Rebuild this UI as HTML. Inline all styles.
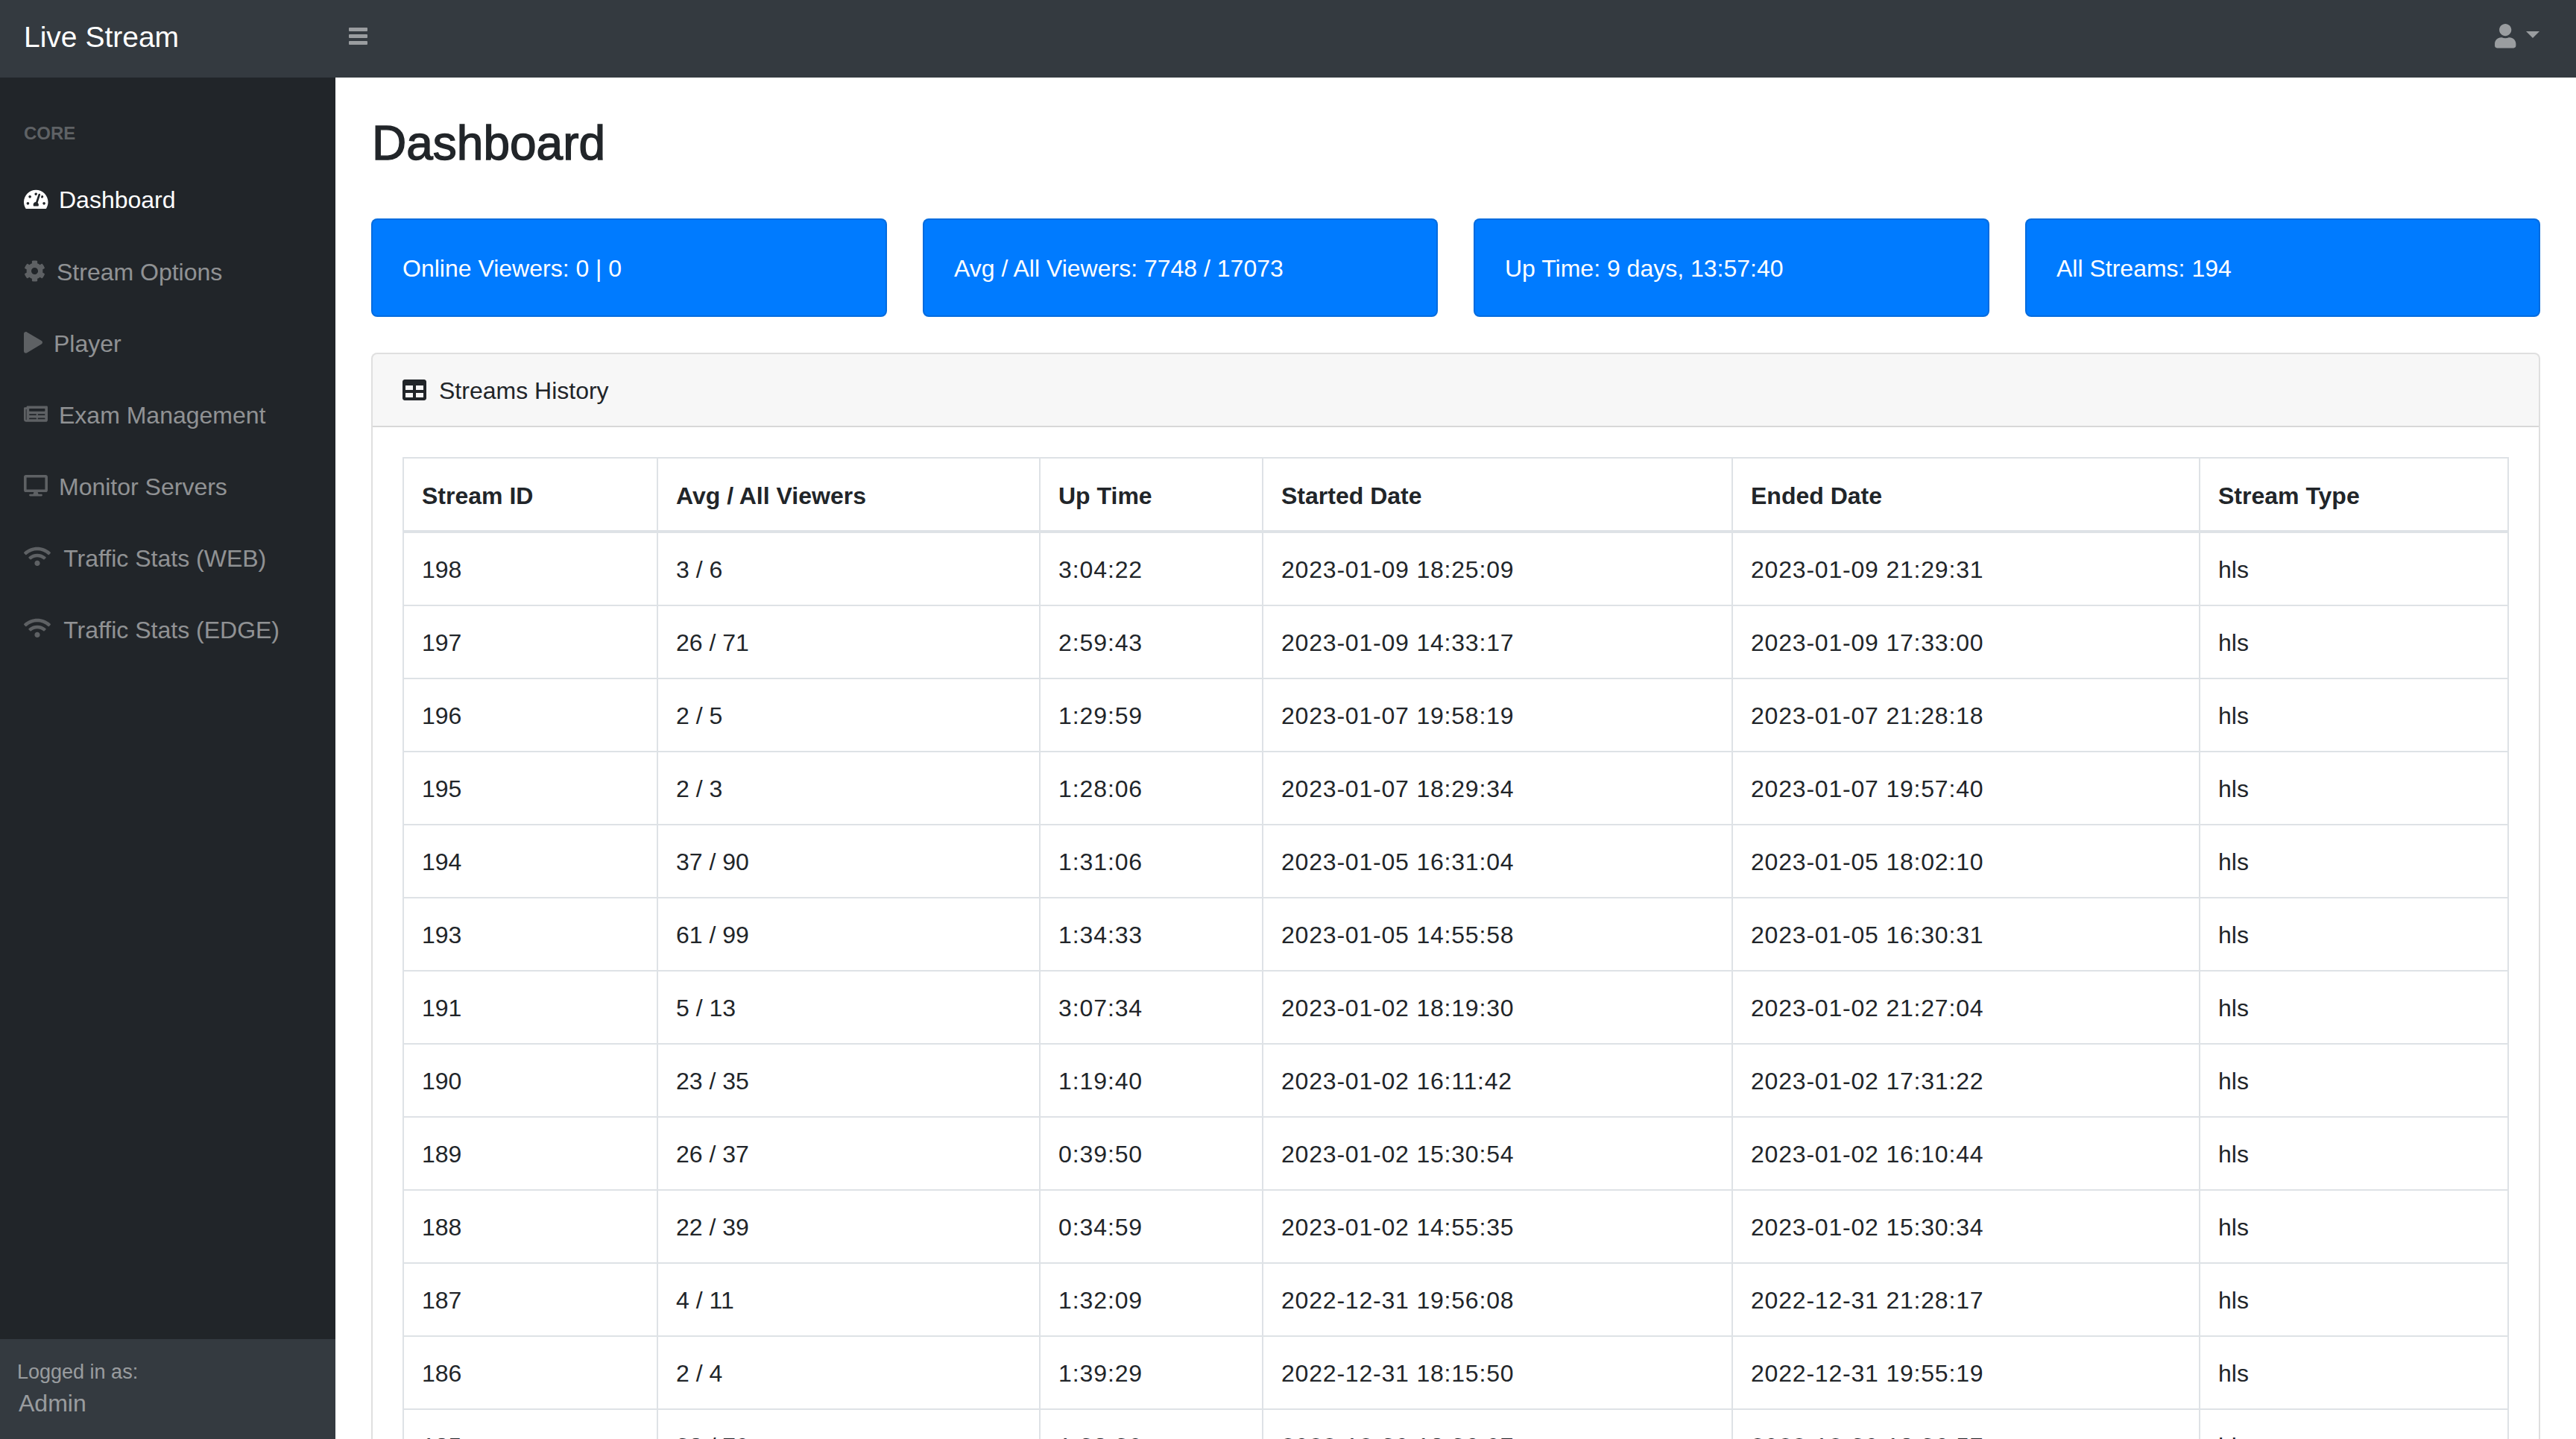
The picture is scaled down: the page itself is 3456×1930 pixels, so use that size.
<!DOCTYPE html>
<html lang="en"><head><meta charset="utf-8"><title>Dashboard - Live Stream</title>
<style>
*{box-sizing:border-box;margin:0;padding:0}
html,body{width:3456px;height:1930px;overflow:hidden;background:#fff}
body{position:relative;font-family:"Liberation Sans",sans-serif;color:#212529;-webkit-font-smoothing:antialiased}
.t{position:absolute;white-space:nowrap}
.ic{position:absolute;overflow:visible}
.topnav{position:absolute;left:0;top:0;width:3456px;height:104px;background:#343a40}
.bar{position:absolute;left:468px;width:25px;height:4.6px;border-radius:1px;background:rgba(255,255,255,.5)}
.caret{position:absolute;left:3389px;top:41.8px;width:0;height:0;border-top:9.6px solid rgba(255,255,255,.5);border-left:9.6px solid transparent;border-right:9.6px solid transparent}
.sidenav{position:absolute;left:0;top:0;width:450px;height:1930px;}
.sidenav::before{content:"";position:absolute;left:0;top:104px;width:450px;height:1826px;background:#212529}
.sfoot{position:absolute;left:0;top:1796px;width:450px;height:134px;background:#343a40}
.content{position:absolute;left:0;top:0;width:3456px;height:1930px}
.bcard{position:absolute;top:293px;height:132px;background:#007bff;border:2px solid rgba(0,0,0,.125);border-radius:8px}
.card{position:absolute;left:498px;top:473px;width:2910px;height:1700px;border:2px solid rgba(0,0,0,.125);border-radius:8px;background:#fff;overflow:hidden}
.chead{position:absolute;left:0;top:0;width:100%;height:98px;background:rgba(0,0,0,.03);border-bottom:2px solid rgba(0,0,0,.125)}
.vl{position:absolute;top:613px;width:2px;height:1400px;background:#dee2e6}
.hl{position:absolute;left:540px;width:2826px;background:#dee2e6}
</style></head>
<body>
<main class="content"><div class="t h1" style="left:499px;top:143.80px;font-size:64px;line-height:96px;color:#212529;-webkit-text-stroke:1.4px #212529;">Dashboard</div><div class="bcard" style="left:498px;width:692px"></div><div class="t" style="left:540px;top:336.40px;font-size:32px;line-height:48px;color:#fff;">Online Viewers: 0 | 0</div><div class="bcard" style="left:1238px;width:691px"></div><div class="t" style="left:1280px;top:336.40px;font-size:32px;line-height:48px;color:#fff;">Avg / All Viewers: 7748 / 17073</div><div class="bcard" style="left:1977px;width:692px"></div><div class="t" style="left:2019px;top:336.40px;font-size:32px;line-height:48px;color:#fff;">Up Time: 9 days, 13:57:40</div><div class="bcard" style="left:2717px;width:691px"></div><div class="t" style="left:2759px;top:336.40px;font-size:32px;line-height:48px;color:#fff;">All Streams: 194</div><div class="card"><div class="chead"></div></div><svg class="ic" style="left:540px;top:507.3px;width:32px;height:32px" viewBox="0 0 512 512"><path fill="#212529" d="M464 32H48C21.49 32 0 53.49 0 80v352c0 26.51 21.49 48 48 48h416c26.51 0 48-21.49 48-48V80c0-26.51-21.49-48-48-48zM224 416H64v-96h160v96zm0-160H64v-96h160v96zm224 160H288v-96h160v96zm0-160H288v-96h160v96z"/></svg><div class="t" style="left:589px;top:500.00px;font-size:32px;line-height:48px;color:#212529;">Streams History</div><div class="vl" style="left:540px"></div><div class="vl" style="left:881px"></div><div class="vl" style="left:1394px"></div><div class="vl" style="left:1693px"></div><div class="vl" style="left:2323px"></div><div class="vl" style="left:2950px"></div><div class="vl" style="left:3364px"></div><div class="hl" style="top:613px;height:2px"></div><div class="hl" style="top:711px;height:4px"></div><div class="hl" style="top:811px;height:2px"></div><div class="hl" style="top:909px;height:2px"></div><div class="hl" style="top:1007px;height:2px"></div><div class="hl" style="top:1105px;height:2px"></div><div class="hl" style="top:1203px;height:2px"></div><div class="hl" style="top:1301px;height:2px"></div><div class="hl" style="top:1399px;height:2px"></div><div class="hl" style="top:1497px;height:2px"></div><div class="hl" style="top:1595px;height:2px"></div><div class="hl" style="top:1693px;height:2px"></div><div class="hl" style="top:1791px;height:2px"></div><div class="hl" style="top:1889px;height:2px"></div><div class="t" style="left:566px;top:640.50px;font-size:32px;line-height:48px;color:#212529;font-weight:bold;">Stream ID</div><div class="t" style="left:907px;top:640.50px;font-size:32px;line-height:48px;color:#212529;font-weight:bold;">Avg / All Viewers</div><div class="t" style="left:1420px;top:640.50px;font-size:32px;line-height:48px;color:#212529;font-weight:bold;">Up Time</div><div class="t" style="left:1719px;top:640.50px;font-size:32px;line-height:48px;color:#212529;font-weight:bold;">Started Date</div><div class="t" style="left:2349px;top:640.50px;font-size:32px;line-height:48px;color:#212529;font-weight:bold;">Ended Date</div><div class="t" style="left:2976px;top:640.50px;font-size:32px;line-height:48px;color:#212529;font-weight:bold;">Stream Type</div><div class="t" style="left:566px;top:740.00px;font-size:32px;line-height:48px;color:#212529;">198</div><div class="t" style="left:907px;top:740.00px;font-size:32px;line-height:48px;color:#212529;">3 / 6</div><div class="t" style="left:1420px;top:740.00px;font-size:32px;line-height:48px;color:#212529;letter-spacing:0.9px;">3:04:22</div><div class="t" style="left:1719px;top:740.00px;font-size:32px;line-height:48px;color:#212529;letter-spacing:0.8px;">2023-01-09 18:25:09</div><div class="t" style="left:2349px;top:740.00px;font-size:32px;line-height:48px;color:#212529;letter-spacing:0.8px;">2023-01-09 21:29:31</div><div class="t" style="left:2976px;top:740.00px;font-size:32px;line-height:48px;color:#212529;">hls</div><div class="t" style="left:566px;top:838.00px;font-size:32px;line-height:48px;color:#212529;">197</div><div class="t" style="left:907px;top:838.00px;font-size:32px;line-height:48px;color:#212529;">26 / 71</div><div class="t" style="left:1420px;top:838.00px;font-size:32px;line-height:48px;color:#212529;letter-spacing:0.9px;">2:59:43</div><div class="t" style="left:1719px;top:838.00px;font-size:32px;line-height:48px;color:#212529;letter-spacing:0.8px;">2023-01-09 14:33:17</div><div class="t" style="left:2349px;top:838.00px;font-size:32px;line-height:48px;color:#212529;letter-spacing:0.8px;">2023-01-09 17:33:00</div><div class="t" style="left:2976px;top:838.00px;font-size:32px;line-height:48px;color:#212529;">hls</div><div class="t" style="left:566px;top:936.00px;font-size:32px;line-height:48px;color:#212529;">196</div><div class="t" style="left:907px;top:936.00px;font-size:32px;line-height:48px;color:#212529;">2 / 5</div><div class="t" style="left:1420px;top:936.00px;font-size:32px;line-height:48px;color:#212529;letter-spacing:0.9px;">1:29:59</div><div class="t" style="left:1719px;top:936.00px;font-size:32px;line-height:48px;color:#212529;letter-spacing:0.8px;">2023-01-07 19:58:19</div><div class="t" style="left:2349px;top:936.00px;font-size:32px;line-height:48px;color:#212529;letter-spacing:0.8px;">2023-01-07 21:28:18</div><div class="t" style="left:2976px;top:936.00px;font-size:32px;line-height:48px;color:#212529;">hls</div><div class="t" style="left:566px;top:1034.00px;font-size:32px;line-height:48px;color:#212529;">195</div><div class="t" style="left:907px;top:1034.00px;font-size:32px;line-height:48px;color:#212529;">2 / 3</div><div class="t" style="left:1420px;top:1034.00px;font-size:32px;line-height:48px;color:#212529;letter-spacing:0.9px;">1:28:06</div><div class="t" style="left:1719px;top:1034.00px;font-size:32px;line-height:48px;color:#212529;letter-spacing:0.8px;">2023-01-07 18:29:34</div><div class="t" style="left:2349px;top:1034.00px;font-size:32px;line-height:48px;color:#212529;letter-spacing:0.8px;">2023-01-07 19:57:40</div><div class="t" style="left:2976px;top:1034.00px;font-size:32px;line-height:48px;color:#212529;">hls</div><div class="t" style="left:566px;top:1132.00px;font-size:32px;line-height:48px;color:#212529;">194</div><div class="t" style="left:907px;top:1132.00px;font-size:32px;line-height:48px;color:#212529;">37 / 90</div><div class="t" style="left:1420px;top:1132.00px;font-size:32px;line-height:48px;color:#212529;letter-spacing:0.9px;">1:31:06</div><div class="t" style="left:1719px;top:1132.00px;font-size:32px;line-height:48px;color:#212529;letter-spacing:0.8px;">2023-01-05 16:31:04</div><div class="t" style="left:2349px;top:1132.00px;font-size:32px;line-height:48px;color:#212529;letter-spacing:0.8px;">2023-01-05 18:02:10</div><div class="t" style="left:2976px;top:1132.00px;font-size:32px;line-height:48px;color:#212529;">hls</div><div class="t" style="left:566px;top:1230.00px;font-size:32px;line-height:48px;color:#212529;">193</div><div class="t" style="left:907px;top:1230.00px;font-size:32px;line-height:48px;color:#212529;">61 / 99</div><div class="t" style="left:1420px;top:1230.00px;font-size:32px;line-height:48px;color:#212529;letter-spacing:0.9px;">1:34:33</div><div class="t" style="left:1719px;top:1230.00px;font-size:32px;line-height:48px;color:#212529;letter-spacing:0.8px;">2023-01-05 14:55:58</div><div class="t" style="left:2349px;top:1230.00px;font-size:32px;line-height:48px;color:#212529;letter-spacing:0.8px;">2023-01-05 16:30:31</div><div class="t" style="left:2976px;top:1230.00px;font-size:32px;line-height:48px;color:#212529;">hls</div><div class="t" style="left:566px;top:1328.00px;font-size:32px;line-height:48px;color:#212529;">191</div><div class="t" style="left:907px;top:1328.00px;font-size:32px;line-height:48px;color:#212529;">5 / 13</div><div class="t" style="left:1420px;top:1328.00px;font-size:32px;line-height:48px;color:#212529;letter-spacing:0.9px;">3:07:34</div><div class="t" style="left:1719px;top:1328.00px;font-size:32px;line-height:48px;color:#212529;letter-spacing:0.8px;">2023-01-02 18:19:30</div><div class="t" style="left:2349px;top:1328.00px;font-size:32px;line-height:48px;color:#212529;letter-spacing:0.8px;">2023-01-02 21:27:04</div><div class="t" style="left:2976px;top:1328.00px;font-size:32px;line-height:48px;color:#212529;">hls</div><div class="t" style="left:566px;top:1426.00px;font-size:32px;line-height:48px;color:#212529;">190</div><div class="t" style="left:907px;top:1426.00px;font-size:32px;line-height:48px;color:#212529;">23 / 35</div><div class="t" style="left:1420px;top:1426.00px;font-size:32px;line-height:48px;color:#212529;letter-spacing:0.9px;">1:19:40</div><div class="t" style="left:1719px;top:1426.00px;font-size:32px;line-height:48px;color:#212529;letter-spacing:0.8px;">2023-01-02 16:11:42</div><div class="t" style="left:2349px;top:1426.00px;font-size:32px;line-height:48px;color:#212529;letter-spacing:0.8px;">2023-01-02 17:31:22</div><div class="t" style="left:2976px;top:1426.00px;font-size:32px;line-height:48px;color:#212529;">hls</div><div class="t" style="left:566px;top:1524.00px;font-size:32px;line-height:48px;color:#212529;">189</div><div class="t" style="left:907px;top:1524.00px;font-size:32px;line-height:48px;color:#212529;">26 / 37</div><div class="t" style="left:1420px;top:1524.00px;font-size:32px;line-height:48px;color:#212529;letter-spacing:0.9px;">0:39:50</div><div class="t" style="left:1719px;top:1524.00px;font-size:32px;line-height:48px;color:#212529;letter-spacing:0.8px;">2023-01-02 15:30:54</div><div class="t" style="left:2349px;top:1524.00px;font-size:32px;line-height:48px;color:#212529;letter-spacing:0.8px;">2023-01-02 16:10:44</div><div class="t" style="left:2976px;top:1524.00px;font-size:32px;line-height:48px;color:#212529;">hls</div><div class="t" style="left:566px;top:1622.00px;font-size:32px;line-height:48px;color:#212529;">188</div><div class="t" style="left:907px;top:1622.00px;font-size:32px;line-height:48px;color:#212529;">22 / 39</div><div class="t" style="left:1420px;top:1622.00px;font-size:32px;line-height:48px;color:#212529;letter-spacing:0.9px;">0:34:59</div><div class="t" style="left:1719px;top:1622.00px;font-size:32px;line-height:48px;color:#212529;letter-spacing:0.8px;">2023-01-02 14:55:35</div><div class="t" style="left:2349px;top:1622.00px;font-size:32px;line-height:48px;color:#212529;letter-spacing:0.8px;">2023-01-02 15:30:34</div><div class="t" style="left:2976px;top:1622.00px;font-size:32px;line-height:48px;color:#212529;">hls</div><div class="t" style="left:566px;top:1720.00px;font-size:32px;line-height:48px;color:#212529;">187</div><div class="t" style="left:907px;top:1720.00px;font-size:32px;line-height:48px;color:#212529;">4 / 11</div><div class="t" style="left:1420px;top:1720.00px;font-size:32px;line-height:48px;color:#212529;letter-spacing:0.9px;">1:32:09</div><div class="t" style="left:1719px;top:1720.00px;font-size:32px;line-height:48px;color:#212529;letter-spacing:0.8px;">2022-12-31 19:56:08</div><div class="t" style="left:2349px;top:1720.00px;font-size:32px;line-height:48px;color:#212529;letter-spacing:0.8px;">2022-12-31 21:28:17</div><div class="t" style="left:2976px;top:1720.00px;font-size:32px;line-height:48px;color:#212529;">hls</div><div class="t" style="left:566px;top:1818.00px;font-size:32px;line-height:48px;color:#212529;">186</div><div class="t" style="left:907px;top:1818.00px;font-size:32px;line-height:48px;color:#212529;">2 / 4</div><div class="t" style="left:1420px;top:1818.00px;font-size:32px;line-height:48px;color:#212529;letter-spacing:0.9px;">1:39:29</div><div class="t" style="left:1719px;top:1818.00px;font-size:32px;line-height:48px;color:#212529;letter-spacing:0.8px;">2022-12-31 18:15:50</div><div class="t" style="left:2349px;top:1818.00px;font-size:32px;line-height:48px;color:#212529;letter-spacing:0.8px;">2022-12-31 19:55:19</div><div class="t" style="left:2976px;top:1818.00px;font-size:32px;line-height:48px;color:#212529;">hls</div><div class="t" style="left:566px;top:1916.00px;font-size:32px;line-height:48px;color:#212529;">185</div><div class="t" style="left:907px;top:1916.00px;font-size:32px;line-height:48px;color:#212529;">38 / 70</div><div class="t" style="left:1420px;top:1916.00px;font-size:32px;line-height:48px;color:#212529;letter-spacing:0.9px;">1:38:30</div><div class="t" style="left:1719px;top:1916.00px;font-size:32px;line-height:48px;color:#212529;letter-spacing:0.8px;">2022-12-30 18:36:07</div><div class="t" style="left:2349px;top:1916.00px;font-size:32px;line-height:48px;color:#212529;letter-spacing:0.8px;">2022-12-30 18:36:57</div><div class="t" style="left:2976px;top:1916.00px;font-size:32px;line-height:48px;color:#212529;">hls</div></main><div class="sidenav"><div class="t" style="left:32px;top:160.50px;font-size:24px;line-height:36px;color:rgba(255,255,255,.28);font-weight:bold;text-transform:uppercase;letter-spacing:0px;">Core</div><svg class="ic" style="left:31.8px;top:253.4px;width:32.5px;height:28.9px" viewBox="0 0 576 512"><path fill="#fff" d="M288 32C128.94 32 0 160.94 0 320c0 52.8 14.25 102.26 39.06 144.8 5.61 9.620 16.3 15.2 27.44 15.2h443c11.14 0 21.83-5.58 27.44-15.2C561.75 422.26 576 372.8 576 320c0-159.06-128.94-288-288-288zm0 64c14.71 0 26.58 10.13 30.32 23.65-1.110 2.260-2.640 4.230-3.450 6.670l-9.220 27.670c-5.130 3.490-10.970 6.010-17.640 6.010-17.670 0-32-14.330-32-32S270.330 96 288 96zM96 384c-17.670 0-32-14.330-32-32s14.330-32 32-32 32 14.330 32 32-14.330 32-32 32zm48-160c-17.670 0-32-14.330-32-32s14.330-32 32-32 32 14.330 32 32-14.330 32-32 32zm246.770-72.410l-61.330 184C343.130 347.330 352 364.540 352 384c0 11.720-3.380 22.550-8.880 32H232.880c-5.500-9.450-8.880-20.280-8.880-32 0-33.940 26.500-61.430 59.900-63.590l61.340-184.010c4.170-12.560 17.730-19.450 30.360-15.170 12.570 4.190 19.350 17.790 15.170 30.360zm14.660 57.200l15.520-46.550c3.470-1.290 7.130-2.230 11.050-2.230 17.670 0 32 14.330 32 32s-14.330 32-32 32c-11.380-.010-20.890-6.270-26.570-15.220zM480 384c-17.670 0-32-14.330-32-32s14.330-32 32-32 32 14.330 32 32-14.330 32-32 32z"/></svg><div class="t" style="left:79px;top:244.40px;font-size:32px;line-height:48px;color:#fff;">Dashboard</div><svg class="ic" style="left:31.9px;top:348.9px;width:29px;height:29px" viewBox="0 0 512 512"><path fill="rgba(255,255,255,.28)" d="M487.4 315.7l-42.6-24.6c4.3-23.2 4.3-47 0-70.2l42.6-24.6c4.9-2.8 7.1-8.6 5.5-14-11.1-35.6-30-67.8-54.7-94.6-3.8-4.1-10-5.1-14.8-2.3L380.8 110c-17.9-15.4-38.5-27.3-60.8-35.1V25.8c0-5.6-3.9-10.5-9.4-11.7-36.7-8.2-74.3-7.8-109.2 0-5.5 1.2-9.4 6.1-9.4 11.7V75c-22.2 7.9-42.8 19.8-60.8 35.1L88.7 85.5c-4.9-2.8-11-1.9-14.8 2.3-24.7 26.7-43.6 58.9-54.7 94.6-1.7 5.4.6 11.2 5.5 14L67.3 221c-4.3 23.2-4.3 47 0 70.2l-42.6 24.6c-4.9 2.8-7.1 8.6-5.5 14 11.1 35.6 30 67.8 54.7 94.6 3.8 4.1 10 5.1 14.8 2.3l42.6-24.6c17.9 15.4 38.5 27.3 60.8 35.1v49.2c0 5.6 3.9 10.5 9.4 11.7 36.7 8.2 74.3 7.8 109.2 0 5.5-1.2 9.4-6.1 9.4-11.7v-49.2c22.2-7.9 42.8-19.8 60.8-35.1l42.6 24.6c4.9 2.8 11 1.9 14.8-2.3 24.7-26.7 43.6-58.9 54.7-94.6 1.5-5.5-.7-11.3-5.6-14.1zM256 336c-44.1 0-80-35.9-80-80s35.9-80 80-80 80 35.9 80 80-35.9 80-80 80z"/></svg><div class="t" style="left:76px;top:341.40px;font-size:32px;line-height:48px;color:rgba(255,255,255,.5);">Stream Options</div><svg class="ic" style="left:32px;top:445px;width:25px;height:28.6px" viewBox="0 0 448 512"><path fill="rgba(255,255,255,.28)" d="M424.4 214.7L72.4 6.6C43.8-10.3 0 6.1 0 47.9V464c0 37.5 40.7 60.1 72.4 41.3l352-208c31.4-18.5 31.5-64.1 0-82.6z"/></svg><div class="t" style="left:72px;top:437.40px;font-size:32px;line-height:48px;color:rgba(255,255,255,.5);">Player</div><svg class="ic" style="left:32px;top:541px;width:32px;height:28.4px" viewBox="0 0 576 512"><path fill="rgba(255,255,255,.28)" d="M552 64H88c-13.255 0-24 10.745-24 24v8H24c-13.255 0-24 10.745-24 24v272c0 30.928 25.072 56 56 56h472c26.51 0 48-21.49 48-48V88c0-13.255-10.745-24-24-24zM56 400a8 8 0 0 1-8-8V144h16v248a8 8 0 0 1-8 8zm236-16H140c-6.627 0-12-5.373-12-12v-8c0-6.627 5.373-12 12-12h152c6.627 0 12 5.373 12 12v8c0 6.627-5.373 12-12 12zm208 0H348c-6.627 0-12-5.373-12-12v-8c0-6.627 5.373-12 12-12h152c6.627 0 12 5.373 12 12v8c0 6.627-5.373 12-12 12zm-208-96H140c-6.627 0-12-5.373-12-12v-8c0-6.627 5.373-12 12-12h152c6.627 0 12 5.373 12 12v8c0 6.627-5.373 12-12 12zm208 0H348c-6.627 0-12-5.373-12-12v-8c0-6.627 5.373-12 12-12h152c6.627 0 12 5.373 12 12v8c0 6.627-5.373 12-12 12zm0-96H140c-6.627 0-12-5.373-12-12v-40c0-6.627 5.373-12 12-12h360c6.627 0 12 5.373 12 12v40c0 6.627-5.373 12-12 12z"/></svg><div class="t" style="left:79px;top:532.50px;font-size:32px;line-height:48px;color:rgba(255,255,255,.5);">Exam Management</div><svg class="ic" style="left:32px;top:637px;width:32px;height:28.4px" viewBox="0 0 576 512"><path fill="rgba(255,255,255,.28)" d="M528 0H48C21.5 0 0 21.5 0 48v320c0 26.5 21.5 48 48 48h192l-16 48h-72c-13.3 0-24 10.7-24 24s10.7 24 24 24h272c13.3 0 24-10.7 24-24s-10.7-24-24-24h-72l-16-48h192c26.5 0 48-21.5 48-48V48c0-26.5-21.5-48-48-48zm-16 352H64V64h448v288z"/></svg><div class="t" style="left:79px;top:628.90px;font-size:32px;line-height:48px;color:rgba(255,255,255,.5);">Monitor Servers</div><svg class="ic" style="left:32px;top:732.2px;width:36px;height:28.8px" viewBox="0 0 640 512"><path fill="rgba(255,255,255,.28)" d="M634.91 154.88C457.74-8.99 182.19-8.93 5.09 154.88c-6.66 6.16-6.79 16.59-.35 22.98l34.24 33.97c6.14 6.1 16.02 6.23 22.4.38 145.92-133.68 371.3-133.71 517.25 0 6.38 5.85 16.26 5.71 22.4-.38l34.24-33.97c6.43-6.39 6.3-16.82-.36-22.98zM320 352c-35.35 0-64 28.65-64 64s28.65 64 64 64 64-28.65 64-64-28.650-64-64-64zm202.67-83.59c-115.26-101.93-290.21-101.82-405.34 0-6.9 6.1-7.12 16.69-.57 23.15l34.44 33.99c6 5.92 15.66 6.32 22.05.8 83.95-72.57 209.74-72.41 293.49 0 6.39 5.52 16.05 5.13 22.05-.8l34.44-33.99c6.56-6.46 6.33-17.06-.56-23.16z"/></svg><div class="t" style="left:85.2px;top:725.20px;font-size:32px;line-height:48px;color:rgba(255,255,255,.5);">Traffic Stats (WEB)</div><svg class="ic" style="left:32px;top:827.8px;width:36px;height:28.8px" viewBox="0 0 640 512"><path fill="rgba(255,255,255,.28)" d="M634.91 154.88C457.74-8.99 182.19-8.93 5.09 154.88c-6.66 6.16-6.79 16.59-.35 22.98l34.24 33.97c6.14 6.1 16.02 6.23 22.4.38 145.92-133.68 371.3-133.71 517.25 0 6.38 5.85 16.26 5.71 22.4-.38l34.24-33.97c6.43-6.39 6.3-16.82-.36-22.98zM320 352c-35.35 0-64 28.65-64 64s28.65 64 64 64 64-28.65 64-64-28.650-64-64-64zm202.67-83.59c-115.26-101.93-290.21-101.82-405.34 0-6.9 6.1-7.12 16.69-.57 23.15l34.44 33.99c6 5.92 15.66 6.32 22.05.8 83.95-72.57 209.74-72.41 293.49 0 6.39 5.52 16.05 5.13 22.05-.8l34.44-33.99c6.56-6.46 6.33-17.06-.56-23.16z"/></svg><div class="t" style="left:85.2px;top:820.90px;font-size:32px;line-height:48px;color:rgba(255,255,255,.5);">Traffic Stats (EDGE)</div><div class="sfoot"><div class="t" style="left:23px;top:24.00px;font-size:27px;line-height:40px;color:rgba(255,255,255,.5);">Logged in as:</div><div class="t" style="left:25px;top:62.30px;font-size:32px;line-height:48px;color:rgba(255,255,255,.5);">Admin</div></div></div><nav class="topnav"><div class="t brand" style="left:32px;top:20.80px;font-size:39px;line-height:58px;color:#fff;">Live Stream</div><div class="bar" style="top:37px"></div><div class="bar" style="top:46px"></div><div class="bar" style="top:55px"></div><svg class="ic" style="left:3347px;top:32px;width:28.4px;height:32.4px" viewBox="0 0 448 512"><path fill="rgba(255,255,255,.5)" d="M224 256c70.7 0 128-57.3 128-128S294.7 0 224 0 96 57.3 96 128s57.3 128 128 128zm89.6 32h-16.7c-22.2 10.2-46.9 16-72.9 16s-50.6-5.8-72.9-16h-16.7C60.2 288 0 348.2 0 422.4V464c0 26.5 21.5 48 48 48h352c26.5 0 48-21.5 48-48v-41.6c0-74.2-60.2-134.4-134.4-134.4z"/></svg><div class="caret"></div></nav>
</body></html>
